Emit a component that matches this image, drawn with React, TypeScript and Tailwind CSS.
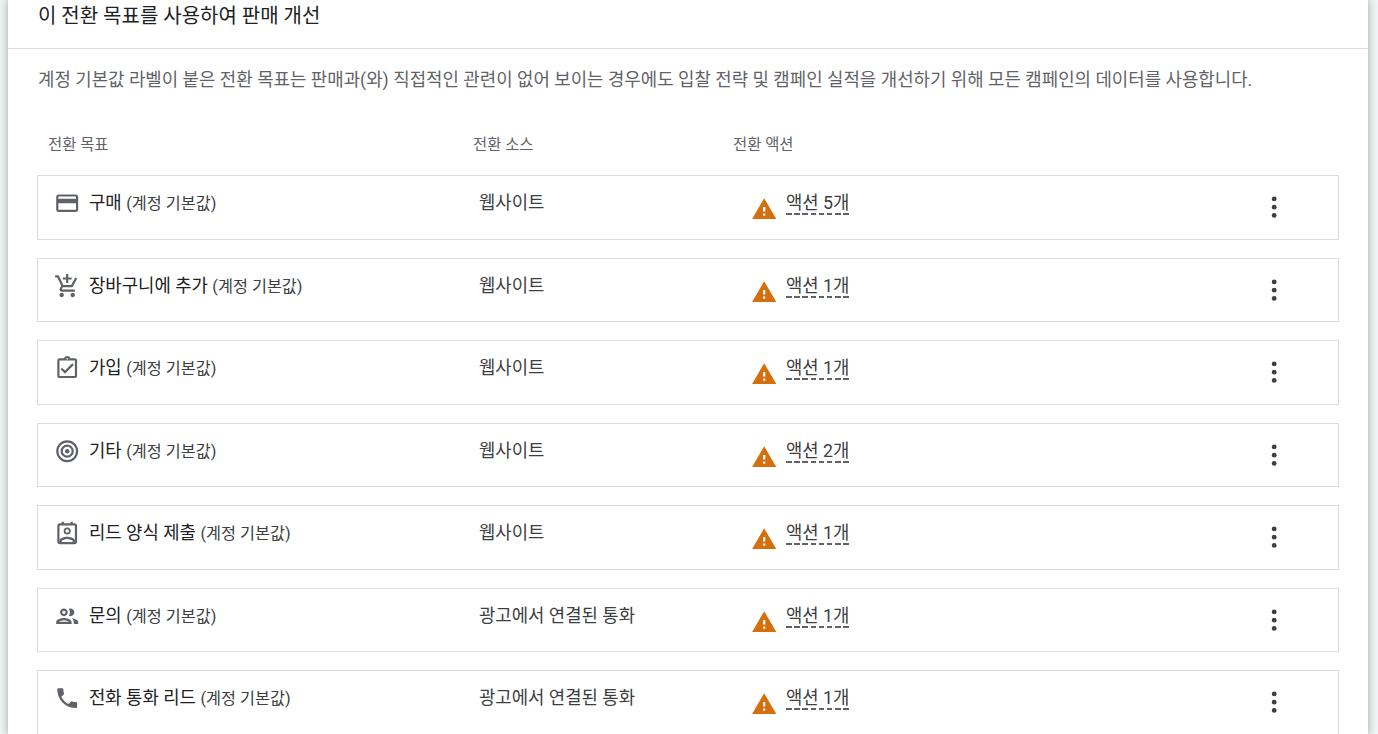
import type { ReactNode } from "react";

const ICONS: Record<string, ReactNode> = {
  card: <path d="M20 4H4c-1.11 0-1.99.89-1.99 2L2 18c0 1.11.89 2 2 2h16c1.11 0 2-.89 2-2V6c0-1.11-.89-2-2-2zm0 14H4v-6h16v6zm0-10H4V6h16v2z" />,
  cart: <path d="M11 9h2V6h3V4h-3V1h-2v3H8v2h3v3zm-4 9c-1.1 0-1.99.9-1.99 2S5.9 22 7 22s2-.9 2-2-.9-2-2-2zm10 0c-1.1 0-1.99.9-1.99 2s.89 2 1.99 2 2-.9 2-2-.9-2-2-2zm-9.83-3.25l.03-.12.9-1.63h7.45c.75 0 1.41-.41 1.75-1.03l3.86-7.01L19.42 4h-.01l-1.1 2-2.76 5H8.53l-.13-.27L6.16 6l-.95-2-.94-2H1v2h2l3.6 7.59-1.35 2.45c-.16.28-.25.61-.25.96 0 1.1.9 2 2 2h12v-2H7.42c-.13 0-.25-.11-.25-.25z" />,
  signup: <path d="M18 9l-1.41-1.42L10 14.17l-2.59-2.58L6 13l4 4zm1-6h-4.18C14.4 1.84 13.3 1 12 1c-1.3 0-2.4.84-2.82 2H5c-.14 0-.27.01-.4.04-.39.08-.74.28-1.01.55-.18.18-.33.4-.43.64-.1.23-.16.49-.16.77v14c0 .27.06.54.16.78s.25.45.43.64c.27.27.62.47 1.01.55.13.02.26.03.4.03h14c1.1 0 2-.9 2-2V5c0-1.1-.9-2-2-2zm-7-.25c.41 0 .75.34.75.75s-.34.75-.75.75-.75-.34-.75-.75.34-.75.75-.75zM19 19H5V5h14v14z" />,
  target: (
    <>
      <circle cx="12" cy="12" r="9" fill="none" stroke="currentColor" strokeWidth="2" />
      <circle cx="12" cy="12" r="5" fill="none" stroke="currentColor" strokeWidth="2" />
      <circle cx="12" cy="12" r="2" />
    </>
  ),
  lead: (
    <>
      <rect x="4" y="4" width="16" height="17" rx="1.5" fill="none" stroke="currentColor" strokeWidth="2" />
      <path d="M7 1.5h2V4H7zM15 1.5h2V4h-2z" />
      <circle cx="12" cy="10" r="2.4" fill="none" stroke="currentColor" strokeWidth="1.6" />
      <path d="M5 20v-1.5c0-2.2 4.4-3.3 7-3.3s7 1.1 7 3.3V20h-2v-1.1c-.8-.7-3-1.700-5-1.700s-4.200 1-5 1.700V20z" />
    </>
  ),
  people: <path d="M9 13.750c-2.340 0-7 1.170-7 3.500V19h14v-1.750c0-2.330-4.660-3.500-7-3.500zM4.340 17c.84-.58 2.870-1.250 4.660-1.250s3.820.67 4.660 1.250H4.340zM9 12c1.930 0 3.500-1.570 3.500-3.500S10.930 5 9 5 5.500 6.570 5.500 8.500 7.070 12 9 12zm0-5c.83 0 1.500.67 1.500 1.500S9.830 10 9 10s-1.500-.67-1.500-1.500S8.170 7 9 7zm7.040 6.810c1.160.84 1.960 1.960 1.960 3.440V19h4v-1.750c0-2.020-3.500-3.170-5.960-3.440zM15 12c1.930 0 3.500-1.570 3.500-3.500S16.930 5 15 5c-.54 0-1.040.13-1.500.35.63.89 1 1.980 1 3.150s-.37 2.260-1 3.150c.46.22.96.35 1.500.35z" />,
  phone: <path d="M6.620 10.790c1.440 2.830 3.760 5.140 6.590 6.590l2.200-2.200c.27-.27.67-.36 1.020-.24 1.120.37 2.330.57 3.570.57.55 0 1 .45 1 1V20c0 .55-.45 1-1 1-9.390 0-17-7.610-17-17 0-.55.45-1 1-1h3.500c.55 0 1 .45 1 1 0 1.250.2 2.450.57 3.570.11.35.03.74-.25 1.020l-2.200 2.200z" />,
};

const GOALS = [
  { icon: "card", name: "구매", source: "웹사이트", actions: "액션 5개" },
  { icon: "cart", name: "장바구니에 추가", source: "웹사이트", actions: "액션 1개" },
  { icon: "signup", name: "가입", source: "웹사이트", actions: "액션 1개" },
  { icon: "target", name: "기타", source: "웹사이트", actions: "액션 2개" },
  { icon: "lead", name: "리드 양식 제출", source: "웹사이트", actions: "액션 1개" },
  { icon: "people", name: "문의", source: "광고에서 연결된 통화", actions: "액션 1개" },
  { icon: "phone", name: "전화 통화 리드", source: "광고에서 연결된 통화", actions: "액션 1개" },
];

function GoalRow({ goal }: { goal: (typeof GOALS)[number] }) {
  return (
    <div className="grid grid-cols-[441px_272px_1fr_76px] h-[64.5px] shrink-0 mb-[18px] border border-[#dadce0] bg-white">
      <div className="flex items-start pl-[16px] pt-[15px]">
        <svg viewBox="0 0 24 24" className="w-[26.4px] h-[26.4px] -mt-[1px] shrink-0 fill-current text-[#5f6368]">{ICONS[goal.icon]}</svg>
        <span className="ml-[8.6px] text-[17.8px] leading-6 text-[#202124]">
          {goal.name} <span className="text-[16.3px] text-[#3c4043]">(계정 기본값)</span>
        </span>
      </div>
      <div className="pt-[15px] text-[17.8px] leading-6 text-[#3c4043]">{goal.source}</div>
      <div className="flex items-start pt-[15px]">
        <svg viewBox="0 0 24 24" className="w-[26.4px] h-[26.4px] mt-[5px] -ml-[0.5px] shrink-0">
          <path d="M1 21h22L12 2 1 21zm12-3h-2v-2h2v2zm0-4h-2v-4h2v4z" fill="#d56e0c" />
        </svg>
        <span className="ml-[9px] text-[17.8px] leading-[24px] text-[#3c4043] bg-[repeating-linear-gradient(90deg,#5f6368_0_5.5px,transparent_5.5px_8.2px)] bg-bottom bg-no-repeat bg-[length:100%_2px]">
          {goal.actions}
        </span>
      </div>
      <div className="flex items-start pt-[18px]">
        <svg viewBox="0 0 24 24" className="w-[26.4px] h-[26.4px] -ml-[1px] fill-[#3c4043]">
          <circle cx="12" cy="4.500" r="2.200" />
          <circle cx="12" cy="12" r="2.200" />
          <circle cx="12" cy="19.500" r="2.200" />
        </svg>
      </div>
    </div>
  );
}

export default function App() {
  return (
    <div className="h-[734px] overflow-hidden bg-[#f1f3f4] font-['Roboto','Noto_Sans_CJK_KR',sans-serif]">
      <div className="ml-2 w-[1360px] h-[734px] bg-white shadow-[0_0_8px_rgba(60,64,67,0.45)] flex flex-col overflow-hidden">
        <div className="h-[49px] shrink-0 border-b border-[#dadce0] pl-[30px] pt-[4px] text-[20px] leading-6 text-[#202124]">
          이 전환 목표를 사용하여 판매 개선
        </div>
        <p className="shrink-0 pl-[30px] mt-[19px] text-[17.85px] leading-6 text-[#5f6368]">
          계정 기본값 라벨이 붙은 전환 목표는 판매과(와) 직접적인 관련이 없어 보이는 경우에도 입찰 전략 및 캠페인 실적을 개선하기 위해 모든 캠페인의 데이터를 사용합니다.
        </p>
        <div className="shrink-0 grid grid-cols-[425px_260px_1fr] pl-[40px] mt-[43px] h-[40px] text-[15.4px] leading-5 text-[#5f6368]">
          <span>전환 목표</span>
          <span>전환 소스</span>
          <span>전환 액션</span>
        </div>
        <div className="shrink-0 flex flex-col mx-[29px]">
          {GOALS.map((goal) => (
            <GoalRow key={goal.name} goal={goal} />
          ))}
        </div>
      </div>
    </div>
  );
}
